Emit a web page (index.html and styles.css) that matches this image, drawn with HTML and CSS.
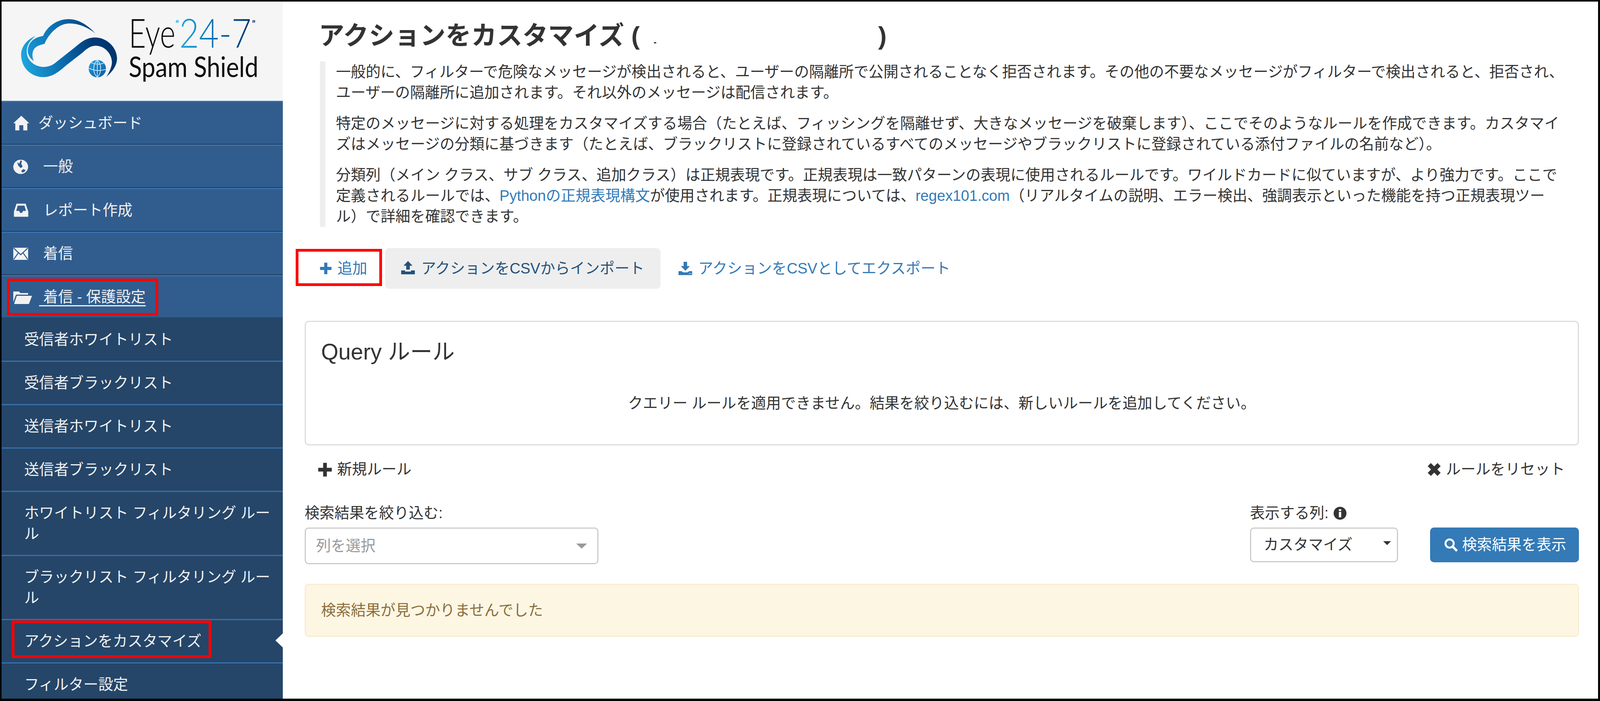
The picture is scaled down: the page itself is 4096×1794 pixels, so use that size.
FILE: index.html
```html
<!DOCTYPE html>
<html lang="ja">
<head>
<meta charset="utf-8">
<title>アクションをカスタマイズ</title>
<link rel="stylesheet" href="styles.css">
</head>
<body>
<div class="app">
  <aside class="sidebar">
    <div class="logo-block">
      <svg class="logo" viewBox="0 -15 850 255" role="img" aria-label="Eye 24/7 Spam Shield">
        <defs>
          <linearGradient id="swoop" gradientUnits="userSpaceOnUse" x1="115" y1="500" x2="1000" y2="350">
            <stop offset="0" stop-color="#1fa8de"/><stop offset="0.45" stop-color="#0a6cae"/><stop offset="0.8" stop-color="#003a75"/><stop offset="1" stop-color="#00356e"/>
          </linearGradient>
          <linearGradient id="arc" gradientUnits="userSpaceOnUse" x1="190" y1="420" x2="845" y2="120">
            <stop offset="0" stop-color="#1b95d2"/><stop offset="0.55" stop-color="#0a6aac"/><stop offset="1" stop-color="#003a75"/>
          </linearGradient>
          <linearGradient id="ball" gradientUnits="userSpaceOnUse" x1="780" y1="480" x2="920" y2="640">
            <stop offset="0" stop-color="#25a0dc"/><stop offset="1" stop-color="#0b5da3"/>
          </linearGradient>
          <linearGradient id="num" gradientUnits="userSpaceOnUse" x1="0" y1="0" x2="820" y2="0">
            <stop offset="0" stop-color="#1ea8e0"/><stop offset="0.5" stop-color="#0b6cb0"/><stop offset="1" stop-color="#00336d"/>
          </linearGradient>
        </defs>
        <g transform="scale(0.3333)">
          <path fill="url(#arc)" d="M845 212C770 130 680 70 580 70C470 70 370 140 330 235C270 245 215 270 190 330C165 390 190 450 240 480C215 430 225 370 260 345C285 325 320 318 345 312C370 240 470 110 590 112C680 112 770 150 845 212Z"/>
          <path fill="url(#swoop)" d="M258 235C170 270 115 340 115 420C115 550 220 638 330 638C420 638 480 590 560 520L720 395C770 350 800 330 850 330C950 335 1010 430 1005 500C1000 550 975 600 950 635C1020 580 1058 510 1055 450C1050 340 950 250 840 250C760 250 710 290 650 340L460 490C420 525 380 540 320 538C240 530 170 470 170 390C170 330 200 275 258 235Z"/>
          <circle cx="862" cy="555" r="85" fill="url(#ball)"/>
          <path fill="none" stroke="#cfe8f6" stroke-width="7" d="M778 550Q860 590 946 562M862 472V638M862 472C815 510 815 600 862 638M862 472C905 510 905 600 862 638M800 495Q860 525 925 500"/>
        </g>
        <g transform="translate(370 0) scale(0.3333)">
          <text class="logo-word" transform="translate(60 350) scale(0.75 1)" font-size="390">Eye</text>
          <text class="logo-num" transform="translate(555 350) scale(0.86 1)" font-size="390">24-7</text>
          <text class="logo-quote" x="518" y="145" font-size="88">“</text>
          <text class="logo-quote-end" x="1268" y="145" font-size="88">”</text>
          <text class="logo-word-sm" transform="translate(60 635) scale(0.878 1)" font-size="272">Spam Shield</text>
        </g>
      </svg>
    </div>
    <nav class="nav">
      <a class="nav-item">
        <span class="nav-slot nav-slot-narrow"><svg class="ic-home" viewBox="0 0 160 147"><path fill="currentColor" d="M80 0L160 75H140V147H100V95H60V147H20V75H0Z"/></svg></span>ダッシュボード
      </a>
      <a class="nav-item">
        <span class="nav-slot"><svg class="ic-globe" viewBox="0 0 150 145"><path fill="currentColor" fill-rule="evenodd" d="M75 0A75 72.500 0 1 1 75 145A75 72.500 0 1 1 75 0ZM75 5L88 16L80 40L95 70L75 85L50 60L40 25L60 40ZM80 115L100 95L125 105L110 125L90 130Z"/></svg></span>&nbsp;一般
      </a>
      <a class="nav-item">
        <span class="nav-slot"><svg class="ic-inbox" viewBox="0 0 24 24"><path fill="currentColor" fill-rule="evenodd" d="M5 2H19L23 14V22H1V14ZM6.800 5L4.500 13H9L10.500 16H13.500L15 13H19.500L17.200 5Z"/></svg></span>&nbsp;レポート作成
      </a>
      <a class="nav-item">
        <span class="nav-slot"><svg class="ic-mail" viewBox="0 0 38 31"><rect fill="currentColor" width="38" height="31"/><path fill="none" stroke="#315d8e" stroke-width="2.500" d="M1 1L19 18L37 1M1 30L13 13M37 30L25 13"/></svg></span>&nbsp;着信
      </a>
      <a class="nav-item nav-item-open">
        <span class="nav-slot"><svg class="ic-folder" viewBox="0 0 48 35"><path fill="currentColor" d="M0 3H15L18 7H38V11H7L0 30ZM9 14H48L40 35H2Z"/></svg></span><span class="nav-current">&nbsp;着信 - 保護設定</span>
        <span class="mark mark-folder"></span>
      </a>
      <a class="sub-item">受信者ホワイトリスト</a>
      <a class="sub-item">受信者ブラックリスト</a>
      <a class="sub-item">送信者ホワイトリスト</a>
      <a class="sub-item">送信者ブラックリスト</a>
      <a class="sub-item">ホワイトリスト フィルタリング ルール</a>
      <a class="sub-item">ブラックリスト フィルタリング ルール</a>
      <a class="sub-item sub-item-active">アクションをカスタマイズ<span class="mark mark-action"></span></a>
      <a class="sub-item">フィルター設定</a>
    </nav>
  </aside>

  <main class="main">
    <h1 class="page-title">アクションをカスタマイズ (<span class="redacted"></span>)</h1>
    <blockquote class="intro">
      <p>一般的に、フィルターで危険なメッセージが検出されると、ユーザーの隔離所で公開されることなく拒否されます。その他の不要なメッセージがフィルターで検出されると、拒否され、<br>ユーザーの隔離所に追加されます。それ以外のメッセージは配信されます。</p>
      <p>特定のメッセージに対する処理をカスタマイズする場合（たとえば、フィッシングを隔離せず、大きなメッセージを破棄します）、ここでそのようなルールを作成できます。カスタマイ<br>ズはメッセージの分類に基づきます（たとえば、ブラックリストに登録されているすべてのメッセージやブラックリストに登録されている添付ファイルの名前など）。</p>
      <p>分類列（メイン クラス、サブ クラス、追加クラス）は正規表現です。正規表現は一致パターンの表現に使用されるルールです。ワイルドカードに似ていますが、より強力です。ここで<br>定義されるルールでは、<a class="link">Pythonの正規表現構文</a>が使用されます。正規表現については、<a class="link">regex101.com</a>（リアルタイムの説明、エラー検出、強調表示といった機能を持つ正規表現ツー<br>ル）で詳細を確認できます。</p>
    </blockquote>

    <div class="actions">
      <a class="btn btn-add">
        <svg class="ic-plus-sm" viewBox="0 0 24 24"><path fill="currentColor" d="M9 1H15V9H23V15H15V23H9V15H1V9H9Z"/></svg>追加
        <span class="mark mark-add"></span>
      </a>
      <a class="btn btn-import">
        <svg class="ic-transfer" viewBox="0 0 35 34"><path fill="currentColor" d="M17.500 0L29 12H22V22H13V12H6ZM0 24H10V27H25V24H35V34H0Z"/></svg>アクションをCSVからインポート
      </a>
      <a class="btn btn-export">
        <svg class="ic-transfer" viewBox="0 0 35 34"><path fill="currentColor" fill-rule="evenodd" d="M13 0H22V11H29L17.500 23L6 11H13ZM0 24H8L12 27H23L27 24H35V34H0ZM27 29V31H29V29ZM31 29V31H33V29Z"/></svg>アクションをCSVとしてエクスポート
      </a>
    </div>

    <section class="panel">
      <h2 class="panel-title">Query ルール</h2>
      <p class="panel-empty">クエリー ルールを適用できません。結果を絞り込むには、新しいルールを追加してください。</p>
    </section>

    <div class="rule-row">
      <a class="rule-link"><svg class="ic-plus" viewBox="0 0 24 24"><path fill="currentColor" d="M9 1H15V9H23V15H15V23H9V15H1V9H9Z"/></svg>新規ルール</a>
      <a class="rule-link"><svg class="ic-remove" viewBox="0 0 33 33"><path fill="currentColor" d="M8 0L16.500 8.500L25 0L33 8L24.500 16.500L33 25L25 33L16.500 24.500L8 33L0 25L8.500 16.500L0 8Z"/></svg>ルールをリセット</a>
    </div>

    <div class="filters">
      <div class="filter-left">
        <label class="field-label">検索結果を絞り込む:</label>
        <div class="select select-placeholder"><span>列を選択</span><i class="caret caret-gray"></i></div>
      </div>
      <div class="filter-right">
        <label class="field-label">表示する列:<svg class="ic-info" viewBox="0 0 33 33"><circle cx="16.500" cy="16.500" r="16.500" fill="#333"/><rect x="13.500" y="6" width="6" height="5" fill="#fff"/><rect x="13.500" y="13" width="6" height="14" fill="#fff"/></svg></label>
        <div class="filter-controls">
          <div class="select select-view"><span>カスタマイズ</span><i class="caret caret-dark"></i></div>
          <a class="btn-primary"><svg class="ic-search" viewBox="0 0 35 35"><circle cx="14" cy="14" r="10.500" fill="none" stroke="currentColor" stroke-width="5"/><path stroke="currentColor" stroke-width="6" d="M21 21L33 33"/></svg>検索結果を表示</a>
        </div>
      </div>
    </div>

    <div class="alert">検索結果が見つかりませんでした</div>
  </main>
</div>
</body>
</html>
```
FILE: styles.css
```css
* { box-sizing: border-box; }
html, body { margin: 0; padding: 0; }
body {
  font-family: "Liberation Sans", "Noto Sans CJK JP", sans-serif;
  font-size: 38.1px;
  line-height: 53px;
  color: #333;
  background: #fff;
}
.app {
  display: flex;
  width: 4096px;
  height: 1794px;
  overflow: hidden;
  border-style: solid;
  border-color: #000;
  border-width: 4px 5px 6px 4px;
}

/* sidebar */
.sidebar {
  flex: 0 0 720px;
  background: #254669;
  overflow: hidden;
}
.logo-block {
  height: 254px;
  padding: 15.25px 0 0 19.5px;
  background: #f5f5f5;
}
.logo { display: block; width: 666px; height: 199.75px; }
.logo-word { font-family: Lato, sans-serif; font-weight: 300; fill: #0c0c0c; }
.logo-word-sm { font-family: Lato, sans-serif; font-weight: 400; fill: #0c0c0c; }
.logo-num { font-family: Lato, sans-serif; font-weight: 300; fill: url(#num); }
.logo-quote { font-family: Lato, sans-serif; font-weight: 700; fill: #1ea8e0; }
.logo-quote-end { font-family: Lato, sans-serif; font-weight: 700; fill: #00336d; }

.nav-item {
  position: relative;
  display: flex;
  align-items: center;
  height: 111.5px;
  padding: 2px 0 0 30px;
  color: #f2f2f2;
  background: #315d8e;
  border-top: 3px solid #3a73b1;
  border-bottom: 2px solid #1f3a5c;
}
.nav-item-open { height: 108px; border-bottom: 0; }
.nav-slot { flex: 0 0 66px; display: flex; align-items: center; }
.nav-slot-narrow { flex-basis: 64px; }
.nav-current { text-decoration: underline; text-underline-offset: 8px; }
.ic-home { width: 41px; height: 38px; }
.ic-globe { width: 38px; height: 38px; }
.ic-inbox { width: 40px; height: 40px; }
.ic-mail { width: 38px; height: 31px; }
.ic-folder { width: 48px; height: 35px; }

.sub-item {
  position: relative;
  display: block;
  padding: 27.5px 25px 27.5px 58px;
  color: #f2f2f2;
  background: #254669;
  border-top: 3px solid #3a70aa;
}
.nav-item-open + .sub-item { border-top-color: #254669; }
.sub-item-active::after {
  content: "";
  position: absolute;
  top: 34px;
  right: 0;
  border-style: solid;
  border-color: transparent #fff transparent transparent;
  border-width: 18.5px 19px 18.500px 0;
}

/* red annotation rectangles */
.mark { position: absolute; display: block; border: 7px solid #f00; }
.mark-folder { left: 14px; top: 6px; width: 387px; height: 95px; }
.mark-action { left: 26px; top: 1px; width: 511px; height: 96px; }
.mark-add { left: -20px; right: 3px; top: 2px; bottom: 7px; }

/* main */
.main {
  flex: 1;
  min-width: 0;
  padding: 0 49px 0 56px;
  background: #fff;
}
.page-title {
  position: relative;
  margin: 0 0 21px 36px;
  padding-top: 44px;
  font-size: 65.6px;
  line-height: 88px;
  font-weight: 700;
  color: #333;
  white-space: nowrap;
}
.redacted { display: inline-block; width: 610px; height: 10px; position: relative; }
.redacted::before {
  content: "";
  position: absolute;
  left: 36px;
  top: 4px;
  width: 6px;
  height: 3px;
  background: #333;
}
.intro {
  margin: 0 0 54px 39px;
  padding: 1px 0 0 27px;
  border-left: 14px solid #eee;
  white-space: nowrap;
}
.intro p { margin: 0 0 26px; }
.intro p:last-child { margin-bottom: 0; }
.link { color: #337ab7; }

.actions { display: flex; align-items: stretch; gap: 5px; height: 104px; margin-left: -3px; }
.btn {
  position: relative;
  display: flex;
  align-items: center;
  padding: 0 41px;
  color: #337ab7;
  border-radius: 10px;
  white-space: nowrap;
}
.btn-import { background: #eee; color: #23527c; }
.ic-plus-sm { width: 32px; height: 32px; margin-right: 14px; }
.ic-transfer { width: 35px; height: 34px; margin-right: 16px; }
.btn-import .ic-transfer { margin-top: -4px; }

.panel {
  height: 319px;
  margin-top: 82px;
  padding: 48px 39px 0;
  border: 3px solid #ddd;
  border-radius: 10px;
}
.panel-title {
  margin: 0;
  font-size: 57px;
  line-height: 56px;
  font-weight: 400;
}
.panel-empty { margin: 78px 0 0; text-align: center; }

.rule-row {
  display: flex;
  justify-content: space-between;
  margin-top: 35px;
  padding: 0 36px 0 33px;
}
.rule-link { display: flex; align-items: center; }
.ic-plus { width: 38px; height: 38px; margin-right: 12px; }
.ic-remove { width: 33px; height: 33px; margin-right: 13px; }

.filters {
  display: flex;
  justify-content: space-between;
  align-items: flex-start;
  margin-top: 59px;
}
.field-label { display: flex; align-items: center; margin-bottom: 10px; }
.ic-info { width: 33px; height: 33px; margin-left: 13px; }
.filter-controls { display: flex; gap: 82px; }
.select {
  display: flex;
  justify-content: space-between;
  align-items: center;
  border: 3px solid #ccc;
  border-radius: 10px;
  background: #fff;
}
.select-placeholder { width: 752px; height: 94px; padding: 0 26px; color: #999; }
.select-view { width: 379px; height: 89px; padding: 0 15px 0 32px; }
.caret { display: block; width: 0; height: 0; border-style: solid; border-color: transparent; }
.caret-gray { border-width: 13px 14px 0; border-top-color: #999; }
.caret-dark { border-width: 10px 10.500px 0; border-top-color: #333; margin-bottom: 10px; }
.btn-primary {
  display: flex;
  align-items: center;
  width: 381px;
  height: 89px;
  padding-left: 36px;
  color: #fff;
  background: #337ab7;
  border-radius: 10px;
  white-space: nowrap;
}
.ic-search { width: 35px; height: 35px; margin-right: 11px; }

.alert {
  height: 136px;
  margin-top: 50px;
  padding: 39px 39px 0;
  color: #8a6d3b;
  background: #fdf6e3;
  border: 3px solid #f9ecd0;
  border-radius: 10px;
}
```
